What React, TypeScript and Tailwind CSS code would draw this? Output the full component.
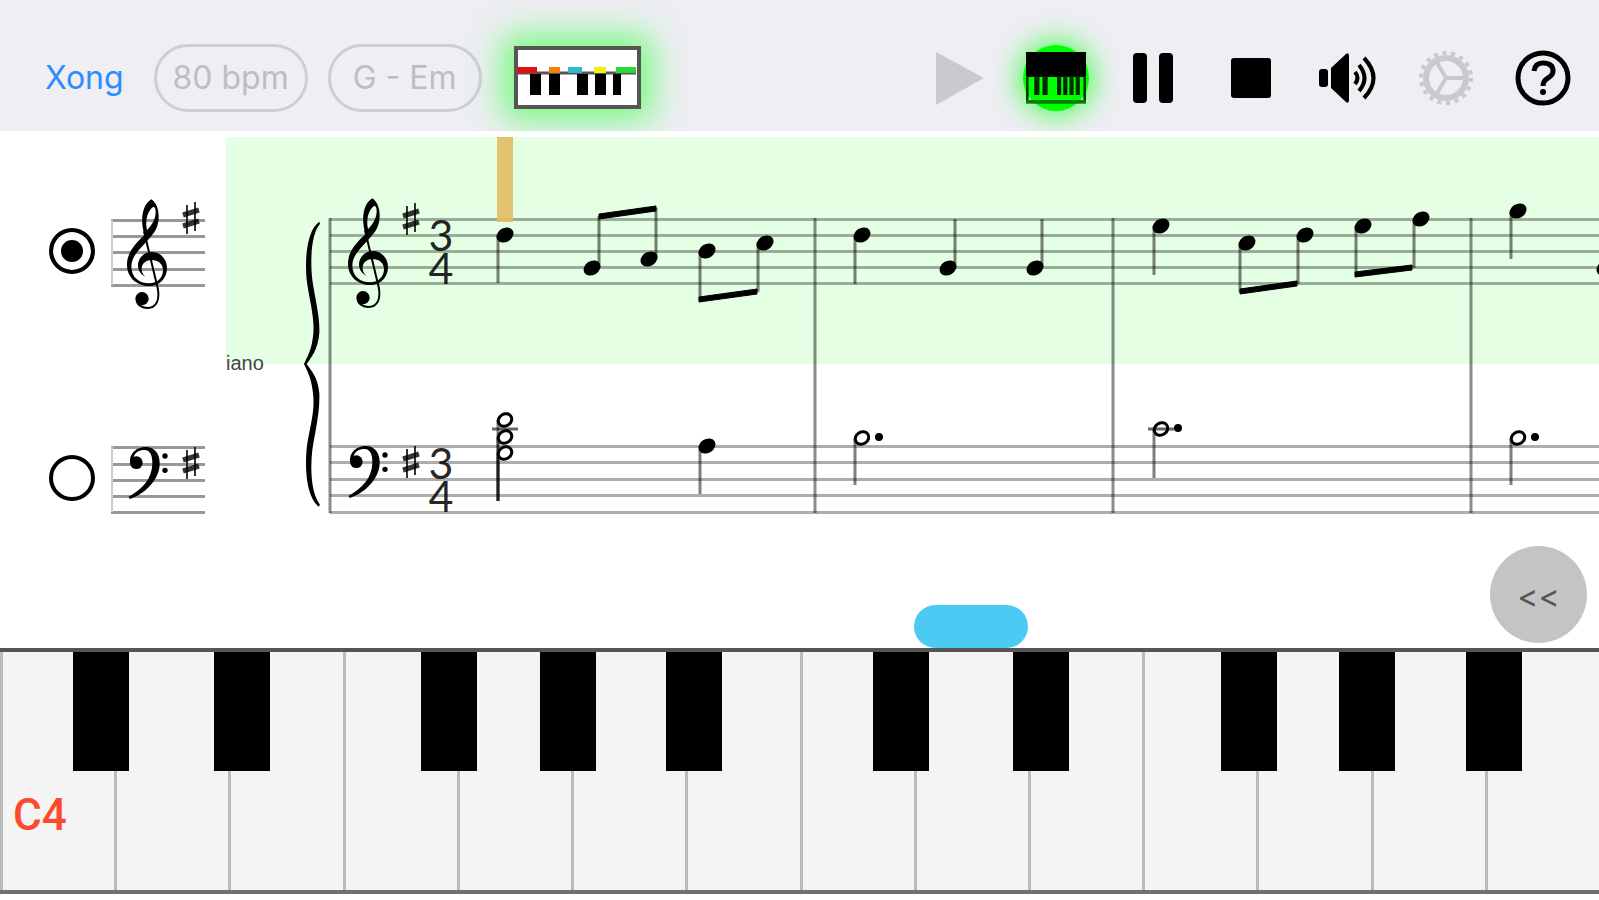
import React, { useState } from 'react'

type Hand = 'treble' | 'bass'

type Note = {
  x: number
  y: number
  stem: number
  up?: boolean
  half?: boolean
  dotted?: boolean
  ledger?: number
}

const TREBLE_LINES = [82, 98, 114, 130, 146]
const BASS_LINES = [309, 325, 342, 358, 375]
const BAR_LINES = [104, 589, 887, 1245]

const NOTES: Note[] = [
  // right hand
  { x: 279, y: 98, stem: 146 },
  { x: 366, y: 131, stem: 79, up: true },
  { x: 423, y: 122, stem: 71, up: true },
  { x: 481, y: 114, stem: 163 },
  { x: 539, y: 106, stem: 155 },
  { x: 636, y: 98, stem: 147 },
  { x: 722, y: 131, stem: 82, up: true },
  { x: 809, y: 131, stem: 82, up: true },
  { x: 935, y: 89, stem: 138 },
  { x: 1021, y: 106, stem: 155 },
  { x: 1079, y: 98, stem: 147 },
  { x: 1137, y: 89, stem: 138 },
  { x: 1195, y: 82, stem: 131 },
  { x: 1292, y: 74, stem: 122 },
  { x: 1379, y: 131, stem: 82, up: true },
  // left hand
  { x: 279, y: 283, stem: 364, half: true, ledger: 292 },
  { x: 279, y: 300, stem: 364, half: true },
  { x: 279, y: 316, stem: 364, half: true },
  { x: 481, y: 309, stem: 357 },
  { x: 636, y: 301, stem: 348, half: true, dotted: true },
  { x: 935, y: 292, stem: 341, half: true, dotted: true, ledger: 292 },
  { x: 1292, y: 301, stem: 348, half: true, dotted: true },
]

const BEAMS = [
  '373,77 430,69 430,74 373,82',
  '473,160 531,152 531,157 473,165',
  '1014,152 1071,144 1071,149 1014,157',
  '1129,135 1186,128 1186,133 1129,140',
]

// black key offset inside its white key
const OCTAVE = [
  { name: 'C', sharp: 'left-[63%]' },
  { name: 'D', sharp: 'left-[87%]' },
  { name: 'E' },
  { name: 'F', sharp: 'left-[68%]' },
  { name: 'G', sharp: 'left-[72%]' },
  { name: 'A', sharp: 'left-[83%]' },
  { name: 'B' },
]

export default function App() {
  const [hand, setHand] = useState<Hand>('treble')

  return (
    <div className="min-h-screen bg-white flex flex-col font-[Inter,sans-serif]">
      <Toolbar />

      <main className="flex-1 flex flex-col">
        <section className="flex h-[474px] pt-1.5 relative">
          <div className="w-[226px] shrink-0">
            <HandOption hand="treble" selected={hand} onSelect={setHand} />
            <HandOption hand="bass" selected={hand} onSelect={setHand} />
          </div>
          <Score />
          <button className="absolute right-3 -bottom-[38px] size-[97px] rounded-full bg-[#c4c4c4] text-[#555] text-[32px] pt-1">
            &lt;&lt;
          </button>
        </section>

        {/* Falling notes */}
        <div className="grid grid-cols-14">
          <div className="col-start-9 h-[43px] rounded-full bg-[#4bcaf3]" />
        </div>

        <Keyboard />
      </main>
    </div>
  )
}

function Toolbar() {
  return (
    <header className="h-[131px] shrink-0 bg-[#eeeef3] flex items-center justify-between pt-6 pl-[45px] pr-2 overflow-hidden">
      <div className="flex items-center">
        <button className="text-[32px] text-[#2b8cff] mr-[30px]">Xong</button>
        <button className="w-[154px] h-[68px] mr-5 rounded-full border-3 border-[#cdcdd2] text-[32px] text-[#bdbdc2]">
          80 bpm
        </button>
        <button className="w-[154px] h-[68px] mr-8 rounded-full border-3 border-[#cdcdd2] text-[32px] text-[#bdbdc2]">
          G - Em
        </button>
        <button aria-label="Keyboard" className="shadow-[0_0_34px_10px_#6ffb78]">
          <KeyboardIcon />
        </button>
      </div>

      <div className="flex items-center">
        <ToolButton label="Play">
          <path d="M5 4 53 30 5 57Z" fill="#c9c9ce" />
        </ToolButton>
        <button aria-label="Piano" className="w-[97px] pr-1 flex justify-center">
          <span className="size-[66px] rounded-full bg-[#00ff00] shadow-[0_0_26px_6px_#5dfb66] flex items-center justify-center">
            <PianoIcon />
          </span>
        </button>
        <ToolButton label="Pause">
          <rect x="8" y="5" width="14" height="50" rx="4" />
          <rect x="34" y="5" width="14" height="50" rx="4" />
        </ToolButton>
        <ToolButton label="Stop">
          <rect x="9" y="10" width="40" height="40" rx="3" />
        </ToolButton>
        <ToolButton label="Volume">
          <rect x="0" y="21" width="9" height="18" rx="3" />
          <path d="M12 20 27 6q3-2 3 2v44q0 4-3 2L12 40Z" />
          <g fill="none" stroke="#000" strokeWidth="4">
            <path d="M36 24q5 6 0 12" />
            <path d="M40 17q11 13 0 26" />
            <path d="M45 10q19 20 0 40" />
          </g>
        </ToolButton>
        <ToolButton label="Settings">
          <g fill="none" stroke="#c9c9ce">
            <circle cx="30" cy="30" r="20" strokeWidth="6" />
            <circle cx="30" cy="30" r="25" strokeWidth="4" strokeDasharray="4 4.73" />
            <path d="M30 30h20M30 30 20 13M30 30 20 47" strokeWidth="4" />
          </g>
        </ToolButton>
        <ToolButton label="Help">
          <circle cx="30" cy="30" r="25" fill="none" stroke="#000" strokeWidth="5" />
          <path
            d="M21 23q1-8 9-8 10 0 10 8 0 4-5 7-5 3-5 8"
            fill="none"
            stroke="#000"
            strokeWidth="5"
          />
          <circle cx="30" cy="44" r="3" />
        </ToolButton>
      </div>
    </header>
  )
}

function ToolButton({ label, children }: { label: string; children: React.ReactNode }) {
  return (
    <button aria-label={label} className="w-[97px] flex justify-center">
      <svg width="60" height="60" viewBox="0 0 60 60">
        {children}
      </svg>
    </button>
  )
}

function KeyboardIcon() {
  return (
    <svg width="127" height="63" viewBox="0 0 127 63" className="block">
      <rect x="2" y="2" width="123" height="59" fill="#fff" stroke="#555" strokeWidth="4" />
      <path d="M4 27h118" stroke="#555" strokeWidth="3" />
      <rect x="3" y="21" width="20" height="6" fill="#e01010" />
      <rect x="35" y="21" width="11" height="6" fill="#f08010" />
      <rect x="54" y="21" width="14" height="6" fill="#30b8d0" />
      <rect x="80" y="21" width="12" height="6" fill="#f4ee10" />
      <rect x="102" y="21" width="20" height="6" fill="#28d838" />
      <path d="M16 28h11v21H16zM35 28h11v21H35zM63 28h11v21H63zM81 28h11v21H81zM99 28h8v21h-8z" />
    </svg>
  )
}

function PianoIcon() {
  return (
    <svg width="60" height="52" viewBox="0 0 58 52" preserveAspectRatio="none" className="shrink-0">
      <rect width="58" height="25" />
      <path d="M1 24v26h56V24" fill="none" stroke="#003c00" strokeWidth="3" />
      <path d="M8 24h5v19H8zM16 24h5v19h-5zM30 24h4v19h-4zM36 24h4v19h-4zM42 24h4v19h-4zM48 24h4v19h-4z" fill="#002800" />
      <rect y="48" width="58" height="3" fill="#0a7a0a" />
    </svg>
  )
}

function HandOption({ hand, selected, onSelect }: { hand: Hand; selected: Hand; onSelect: (hand: Hand) => void }) {
  const lines = hand === 'treble' ? [29, 45, 61, 78, 94] : [29, 46, 62, 78, 94]

  return (
    <label className="h-[227px] pl-[49px] flex items-center gap-4">
      <input
        type="radio"
        name="hand"
        aria-label={hand === 'treble' ? 'Right hand' : 'Left hand'}
        checked={selected === hand}
        onChange={() => onSelect(hand)}
        className="appearance-none size-[46px] shrink-0 rounded-full border-4 border-black bg-white checked:bg-black shadow-[inset_0_0_0_8px_white]"
      />
      <svg width="94" height="120" viewBox="0 0 94 120">
        {lines.map((y) => (
          <rect key={y} y={y - 1} width="94" height="3" fillOpacity="0.4" />
        ))}
        <path d={`M1 ${lines[0]}V${lines[4]}`} stroke="#ccc" strokeWidth="2" />
        {hand === 'treble' ? <TrebleClef x={16} y={8} /> : <BassClef x={18} y={29} />}
        <Sharp x={80} y={hand === 'treble' ? 27 : 45} />
      </svg>
    </label>
  )
}

function Score() {
  return (
    <svg className="flex-1 min-w-0 h-[455px]">
      <rect width="100%" height="227" fill="#e4ffe4" />

      {/* Staves */}
      {[...TREBLE_LINES, ...BASS_LINES].map((y) => (
        <rect key={y} x="104" y={y - 1} width="100%" height="3" fillOpacity="0.32" />
      ))}
      {BAR_LINES.map((x) => (
        <path key={x} d={`M${x} 81V376`} stroke="#000" strokeOpacity="0.45" strokeWidth="3" />
      ))}
      <path
        transform="translate(64 -17) scale(.3333)"
        d="M88 305C50 330 44 420 50 480C58 540 74 590 70 640C66 690 52 710 42 732C52 755 66 775 70 830C74 880 58 925 50 985C44 1050 50 1130 86 1160L90 1154C64 1120 60 1050 67 990C76 930 90 880 88 820C84 770 62 750 50 732C62 715 84 690 88 640C90 590 76 540 67 480C60 420 64 340 90 312Z"
      />
      <text x="0" y="233" fontSize="20" fill="#444" fontFamily="Liberation Sans, sans-serif">
        iano
      </text>

      {/* Clefs, key and time signature */}
      <TrebleClef x={122} y={61} />
      <BassClef x={123} y={309} />
      <Sharp x={185} y={82} />
      <Sharp x={185} y={325} />
      {[114, 147, 342, 375].map((y, i) => (
        <text key={y} x="215" y={y} fontSize="43" textAnchor="middle" fillOpacity="0.85" fontFamily="Lato, sans-serif">
          {i % 2 === 0 ? '3' : '4'}
        </text>
      ))}

      {NOTES.map((note) => (
        <NoteHead key={`${note.x}-${note.y}`} note={note} />
      ))}
      {BEAMS.map((points) => (
        <polygon key={points} points={points} stroke="#000" />
      ))}

      {/* Playback cursor */}
      <rect x="271" y="0" width="16" height="85" fill="#e3bd62" fillOpacity="0.9" />
    </svg>
  )
}

function NoteHead({ note }: { note: Note }) {
  const { x, y, stem, up, half, dotted, ledger } = note
  const stemX = up ? x + 7 : x - 7

  return (
    <g>
      {ledger && <path d={`M${x - 13} ${ledger}h26`} stroke="#000" strokeOpacity="0.6" strokeWidth="3" />}
      <path d={`M${stemX} ${y}V${stem}`} stroke="#000" strokeOpacity="0.5" strokeWidth="3" />
      <ellipse
        cx={x}
        cy={y}
        rx={half ? 7 : 9}
        ry={half ? 6 : 7}
        transform={`rotate(-32 ${x} ${y})`}
        fill={half ? 'none' : '#000'}
        stroke={half ? '#000' : 'none'}
        strokeWidth="3"
      />
      {dotted && <circle cx={x + 17} cy={y - 1} r="4" />}
    </g>
  )
}

function TrebleClef({ x, y }: { x: number; y: number }) {
  return (
    <g transform={`translate(${x} ${y}) scale(.3333) translate(-173 -233)`}>
      <path
        fillRule="evenodd"
        d="M246 234C226 246 214 276 220 318L225 342C195 370 173 395 173 430C173 470 205 494 240 494C272 494 293 470 293 440C293 412 272 392 248 392C222 392 206 412 206 432C206 448 215 460 228 466C218 456 216 448 217 440C218 425 232 416 246 416C266 416 281 428 281 447C281 470 264 486 240 486C208 486 186 466 186 436C186 405 212 382 234 358C256 335 268 318 268 285C268 262 260 244 246 234ZM253 256C238 264 229 288 231 314L233 327C250 308 259 292 259 272C259 262 257 258 253 256Z"
      />
      <path d="M224 330 265 500C272 535 262 560 234 560C220 560 206 552 202 540" fill="none" stroke="#000" strokeWidth="6" />
      <circle cx="218" cy="532" r="20" />
    </g>
  )
}

function BassClef({ x, y }: { x: number; y: number }) {
  return (
    <g transform={`translate(${x} ${y}) scale(.3333) translate(-178 -978)`}>
      <path d="M181 1026C178 998 200 978 228 978C256 978 272 1000 270 1032C268 1077 225 1120 180 1134L177 1127C218 1105 246 1075 248 1030C249 1000 240 987 224 987C208 987 196 994 192 1008Z" />
      <circle cx="200" cy="1025" r="19" />
      <circle cx="286" cy="1005" r="8" />
      <circle cx="286" cy="1048" r="8" />
    </g>
  )
}

function Sharp({ x, y }: { x: number; y: number }) {
  return (
    <g transform={`translate(${x} ${y})`} stroke="#000" strokeOpacity="0.8">
      <path d="M-4-13V16M4-16V13" strokeWidth="2" />
      <path d="M-8-3 8-8M-8 8 8 3" strokeWidth="5" />
    </g>
  )
}

function Keyboard() {
  return (
    <div className="flex h-[246px] border-y-4 border-[#555] border-b-[#707070] bg-[#f4f4f4]">
      {[4, 5].map((octave) => (
        <div key={octave} className="flex-1 flex">
          {OCTAVE.map(({ name, sharp }) => (
            <div
              key={name}
              className="flex-1 relative border-l-3 border-[#bbb]"
            >
              <button aria-label={`${name}${octave}`} className="size-full flex items-end pb-[42px] pl-2.5">
                {name === 'C' && octave === 4 && (
                  <span className="text-[44px] text-[#fb4a2c] font-medium font-[Roboto,sans-serif]">C4</span>
                )}
              </button>
              {sharp && (
                <button
                  aria-label={`${name} sharp ${octave}`}
                  className={`absolute z-10 top-0 w-[56px] h-[119px] bg-black ${sharp}`}
                />
              )}
            </div>
          ))}
        </div>
      ))}
    </div>
  )
}
